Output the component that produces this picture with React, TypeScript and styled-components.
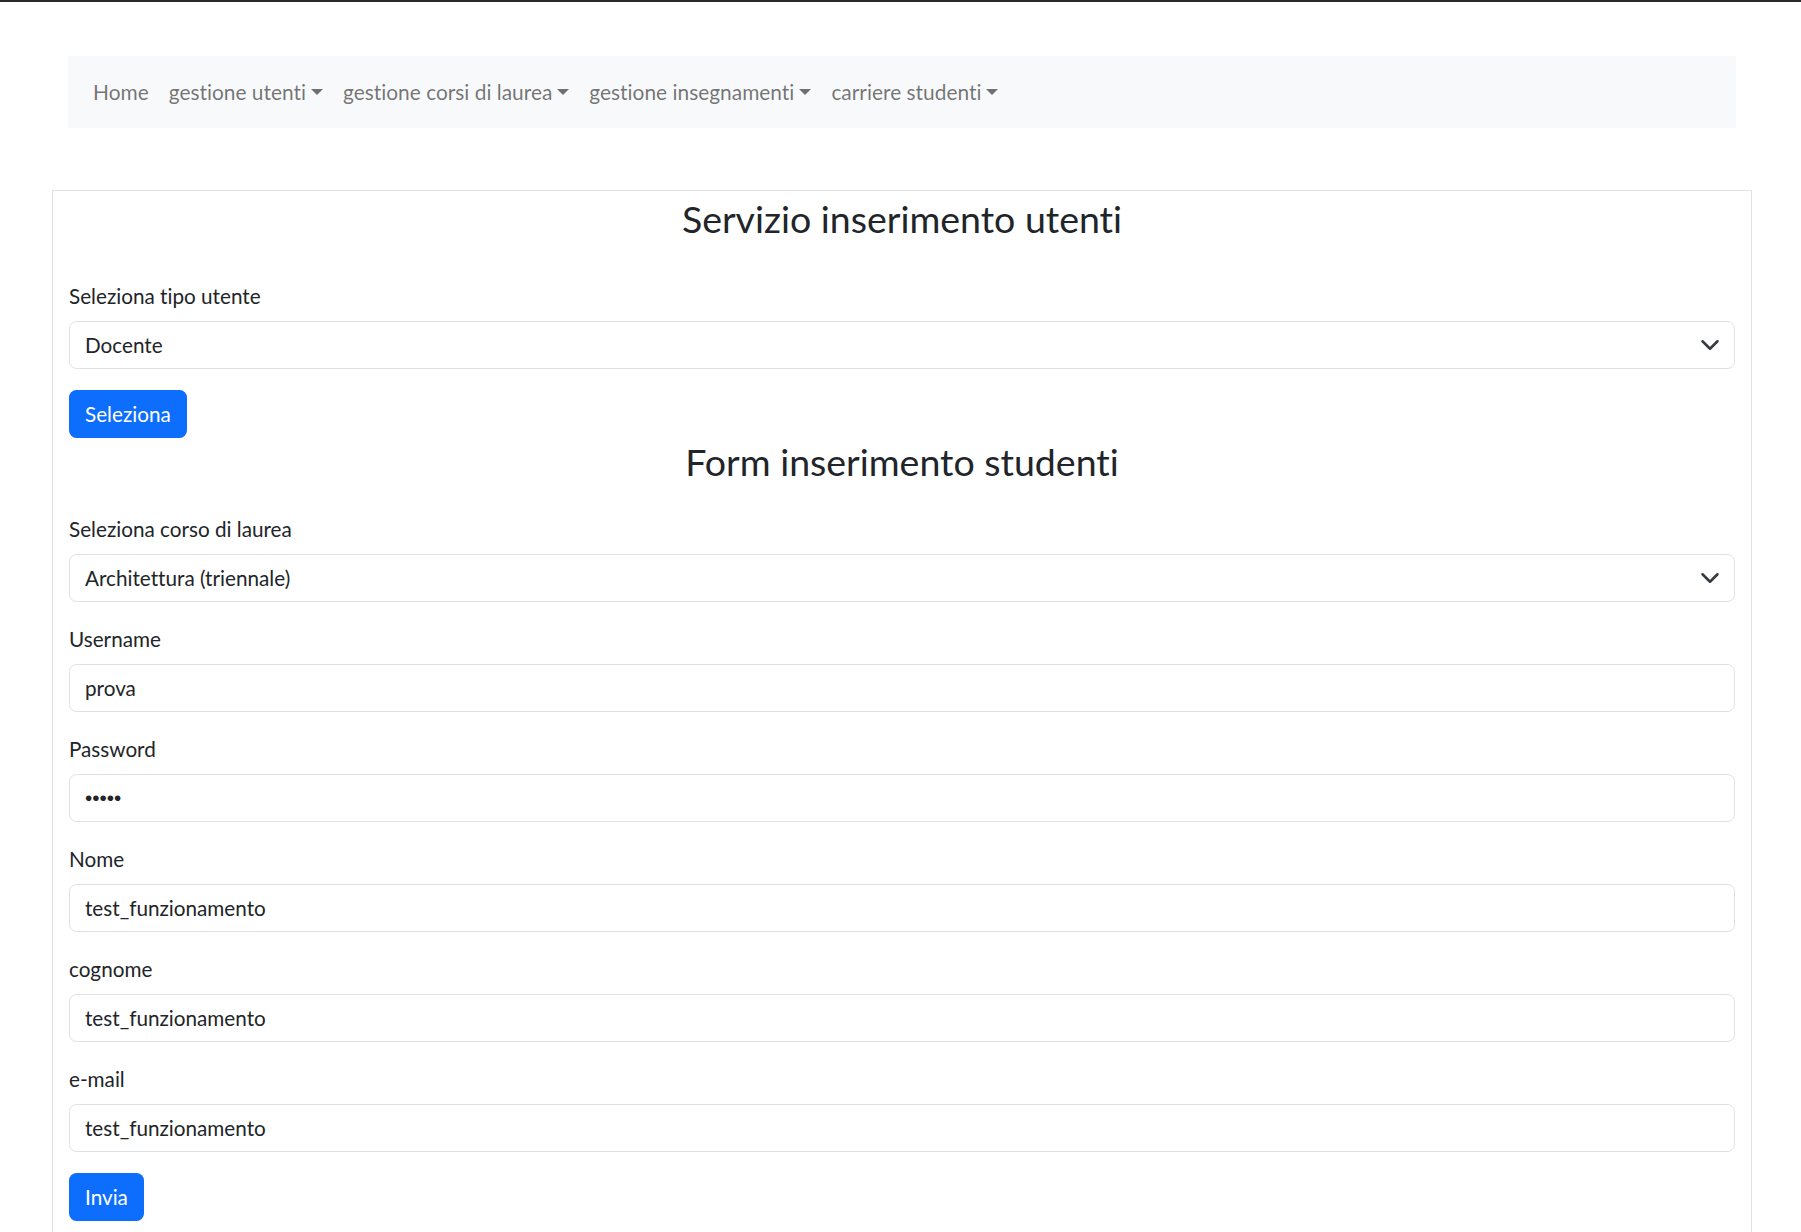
import styled, { createGlobalStyle } from 'styled-components';

const FS = '20.7px';

const GlobalStyle = createGlobalStyle`
body {
  margin: 0;
  border-top: 2px solid #2b2b2b;
  background: #fff;
  color: #212529;
  font-family: Lato, "Noto Sans", sans-serif;
  font-size: ${FS};
  line-height: 30px;
  font-variant-ligatures: none;
}
* { box-sizing: border-box; }
`;

const Navbar = styled.nav`
display: flex;
align-items: center;
height: 72px;
margin: 54px 65px 0 68px;
padding: 0 15px;
background-color: #f8f9fa;
`;
const NavLink = styled.a`
display: flex;
align-items: center;
padding: 0 10px;
color: rgba(0, 0, 0, 0.55);
text-decoration: none;
font-size: 20.9px;
line-height: 30px;
cursor: pointer;
`;
const Caret = styled.span`
display: inline-block;
margin-left: 5px;
width: 0;
height: 0;
border-top: 6px solid currentColor;
border-left: 6px solid transparent;
border-right: 6px solid transparent;
`;
const Card = styled.div`
margin: 62px 49px 0 52px;
padding: 0 16px 16px;
border: 1px solid #dee2e6;
`;
const Title = styled.h2<{ $top: number; $bottom: number }>`
margin: ${p => p.$top}px 0 ${p => p.$bottom}px;
text-align: center;
font-size: 37.5px;
font-weight: 400;
line-height: 48px;
color: #212529;
`;
const Group = styled.div`
margin-bottom: 22px;
`;
const Label = styled.label`
display: block;
margin-bottom: 10px;
line-height: 30px;
font-size: ${FS};
`;
const Input = styled.input`
display: block;
width: 100%;
height: 48px;
padding: 0 15px;
border: 1px solid #dee2e6;
border-radius: 7.5px;
font-family: inherit;
font-size: ${FS};
font-variant-ligatures: none;
color: #212529;
background: #fff;
outline: none;
&[type='password'] {
  font-family: "Liberation Sans", Arial, sans-serif;
}
`;
const SelectWrap = styled.div`
position: relative;
`;
const Select = styled.select`
display: block;
width: 100%;
height: 48px;
padding: 0 60px 0 15px;
border: 1px solid #dee2e6;
border-radius: 7.5px;
font-family: inherit;
font-size: ${FS};
font-variant-ligatures: none;
color: #212529;
background: #fff;
appearance: none;
outline: none;
`;
const Chevron = styled.svg`
position: absolute;
right: 15px;
top: 50%;
width: 20px;
height: 20px;
transform: translateY(-50%);
pointer-events: none;
`;
const Button = styled.button<{ $mb: number }>`
display: block;
height: 48px;
margin-bottom: ${p => p.$mb}px;
padding: 0 16px;
border: none;
border-radius: 7.5px;
background-color: #0d6efd;
color: #fff;
font-family: inherit;
font-size: ${FS};
cursor: pointer;
`;

const Dropdown = ({ value, options }: { value: string; options: string[] }) => (
  <SelectWrap>
    <Select defaultValue={value}>
      {options.map(o => <option key={o}>{o}</option>)}
    </Select>
    <Chevron viewBox="0 0 16 16">
      <path d="m2 5 6 6 6-6" fill="none" stroke="#343a40" strokeWidth="2" strokeLinecap="round" strokeLinejoin="round" />
    </Chevron>
  </SelectWrap>
);

const fields = [
  { label: 'Username', value: 'prova', type: 'text' },
  { label: 'Password', value: 'prova', type: 'password' },
  { label: 'Nome', value: 'test_funzionamento', type: 'text' },
  { label: 'cognome', value: 'test_funzionamento', type: 'text' },
  { label: 'e-mail', value: 'test_funzionamento', type: 'text' },
];

export default function App() {
  return (
    <>
      <GlobalStyle />
      <Navbar>
        <NavLink>Home</NavLink>
        <NavLink>gestione utenti<Caret /></NavLink>
        <NavLink>gestione corsi di laurea<Caret /></NavLink>
        <NavLink>gestione insegnamenti<Caret /></NavLink>
        <NavLink>carriere studenti<Caret /></NavLink>
      </Navbar>
      <Card>
        <Title $top={4} $bottom={38}>Servizio inserimento utenti</Title>
        <Label>Seleziona tipo utente</Label>
        <Dropdown value="Docente" options={['Studente', 'Docente', 'Segreteria']} />
        <div style={{ height: 21 }} />
        <Button $mb={0}>Seleziona</Button>
        <Title $top={0} $bottom={28}>Form inserimento studenti</Title>
        <Group>
          <Label>Seleziona corso di laurea</Label>
          <Dropdown value="Architettura (triennale)" options={['Architettura (triennale)', 'Informatica (triennale)']} />
        </Group>
        {fields.map((f, i) => (
          <Group key={f.label} style={i === fields.length - 1 ? { marginBottom: 21 } : undefined}>
            <Label>{f.label}</Label>
            <Input type={f.type} defaultValue={f.value} />
          </Group>
        ))}
        <Button $mb={0}>Invia</Button>
      </Card>
    </>
  );
}
